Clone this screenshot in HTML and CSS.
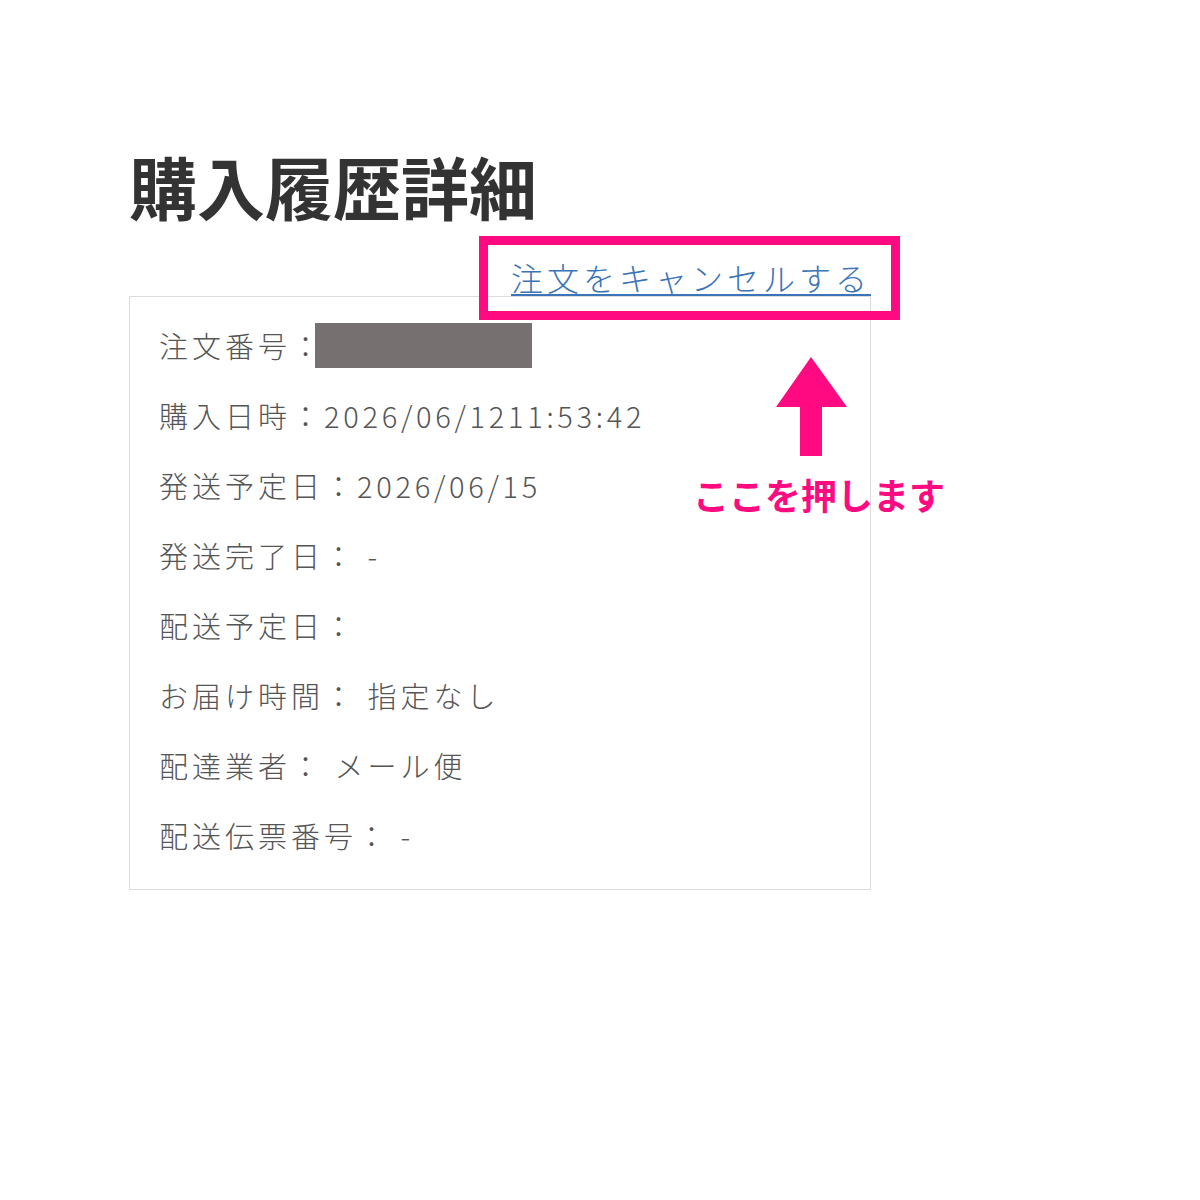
FILE: index.html
```html
<!DOCTYPE html>
<html lang="ja">
<head>
    <meta charset="UTF-8">
    <meta name="viewport" content="width=device-width, initial-scale=1.0">
    <title>購入履歴詳細</title>
    <link rel="stylesheet" href="styles.css">
</head>
<body>
    <main class="page">
        <h1 class="page-title">購入履歴詳細</h1>
        <div class="detail">
            <div class="detail-actions">
                <a class="cancel-link" href="#">注文をキャンセルする</a>
            </div>
            <div class="detail-card">
                <p class="row">注文番号：<span class="masked"></span></p>
                <p class="row">購入日時：<span class="value">2026/06/1211:53:42</span></p>
                <p class="row">発送予定日：<span class="value">2026/06/15</span></p>
                <p class="row">発送完了日： -</p>
                <p class="row">配送予定日：</p>
                <p class="row">お届け時間： 指定なし</p>
                <p class="row">配達業者： メール便</p>
                <p class="row">配送伝票番号： -</p>
            </div>

            <!-- guide marks pointing at the cancel link -->
            <div class="callout-box"></div>
            <svg class="callout-arrow" width="72" height="100" viewBox="0 0 72 100">
                <path d="M35 0 L71 50 L46 50 L46 99 L24 99 L24 50 L0 50 Z" fill="#ff0a80"/>
            </svg>
            <p class="callout-label">ここを押します</p>
        </div>
    </main>
</body>
</html>
```

FILE: styles.css
```css
body {
    margin: 0;
    background: #fff;
    font-family: "Noto Sans CJK JP", "Noto Sans", sans-serif;
}

.page {
    padding: 150px 0 0 129px;
}

.page-title {
    margin: 0;
    font-size: 68px;
    line-height: 72px;
    font-weight: 700;
    color: #333;
}

.detail {
    position: relative;
    width: 742px;
    padding-top: 36px;
}

.detail-actions {
    display: flex;
    justify-content: flex-end;
}

.cancel-link {
    font-size: 32px;
    line-height: 38px;
    letter-spacing: 4px;
    font-weight: 300;
    color: #3b74b8;
    text-decoration: underline;
    text-underline-offset: 3px;
    text-decoration-thickness: 2px;
}

.detail-card {
    border: 1px solid #dcdcdc;
    padding: 13px 29px 19px;
}

.row {
    margin: 0;
    display: flex;
    align-items: center;
    height: 70px;
    font-size: 29px;
    letter-spacing: 4px;
    font-weight: 300;
    color: #555;
    white-space: pre;
}

.row .value {
    letter-spacing: 3.7px;
}

.masked {
    display: inline-block;
    width: 217px;
    height: 45px;
    background: #767070;
    margin-left: -9px;
}

.callout-box {
    position: absolute;
    left: 350px;
    top: 14px;
    width: 403px;
    height: 66px;
    border: 9px solid #ff0a80;
}

.callout-arrow {
    position: absolute;
    left: 647px;
    top: 135px;
}

.callout-label {
    position: absolute;
    left: 564px;
    top: 250px;
    margin: 0;
    font-size: 36px;
    line-height: 44px;
    font-weight: 700;
    color: #ff0a80;
    white-space: nowrap;
}
```
